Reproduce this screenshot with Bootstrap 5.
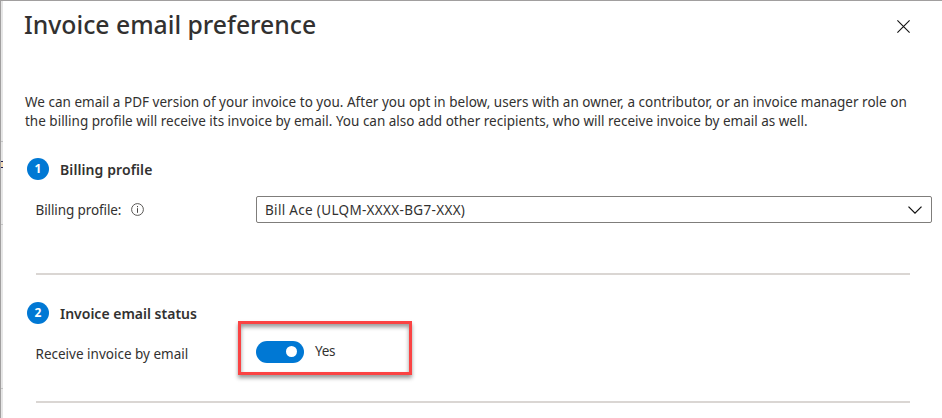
<!DOCTYPE html>
<html lang="en">
<head>
<meta charset="utf-8">
<meta name="viewport" content="width=device-width, initial-scale=1">
<title>Invoice email preference</title>
<link href="https://cdn.jsdelivr.net/npm/bootstrap@5.3.0/dist/css/bootstrap.min.css" rel="stylesheet">
<style>
body{font-family:"Noto Sans","Open Sans",sans-serif;font-size:13.5px;line-height:19px;color:#323130;width:942px;height:418px;overflow:hidden;background:#fff}
.shell{height:418px;border-top:1px solid #a19f9f;border-left:1px solid #a19f9f}
.under{width:2px;background:#e6e6e6}
.under i{display:block;height:1px;background:#c4c4c4}
.under .g1{margin-top:140px}
.under .glyph{margin-top:19px;height:7px;border-top:1px solid #1b1a4e;border-bottom:1px solid #1b1a4e;background:#f3dcb8}
.under .g2{margin-top:56px}
.under .g3{margin-top:163px}
.pane-head{height:92px;padding:7px 32px 0 21px}
.pane-title{font-size:24.75px;line-height:34px;font-weight:500;margin:0;white-space:nowrap}
.close-x{width:13px;height:13px;margin-top:12px}
.intro{padding-left:22px;white-space:nowrap}
.intro span{display:block}
.l1{letter-spacing:.018px}
.step{height:22px;padding-left:24px}
.step-first{margin-top:27px}
.step-second{margin-top:27px}
.step-no{width:22px;height:22px;border-radius:50%;background:#0078d4;color:#fff;font-weight:700;font-size:12px;line-height:21px;text-align:center}
.step-name{font-size:14px;font-weight:600;line-height:22px;margin:0 0 0 11px;padding-top:2px}
.step-one{letter-spacing:.1px}
.field{padding-left:33px}
.field-first{margin-top:16px}
.field-second{margin-top:-3px}
.field-label{width:220px;white-space:nowrap}
.f1{letter-spacing:-.1px;margin-left:-.5px;padding-top:1px}
.f2{letter-spacing:.32px;padding-top:1px}
.f3{margin-left:-.5px}
.info{margin-left:10px}
.picker{width:676px;height:27px;border:1px solid #7f7d7b;border-radius:2px;padding:0 9px 0 8px}
.rule{height:2px;background:#dad6d3;margin-left:33px;width:874px}
.rule-first{margin-top:50px}
.rule-second{margin-top:26px}
.hilite{width:174px;height:54px;margin-left:-18px;border:3px solid #fa4343;padding:7px 0 0 15px;box-shadow:0 3px 4px rgba(0,0,0,.4),inset 0 3px 4px rgba(0,0,0,.4)}
.toggle{width:48px;height:22px;border-radius:11px;background:#0078d4;padding-right:7px}
.knob{width:11px;height:11px;border-radius:50%;background:#fff}
.yes{margin-left:11px;letter-spacing:-.3px}
.label-low{padding-top:12px}
</style>
<script src="https://cdn.jsdelivr.net/npm/bootstrap@5.3.0/dist/js/bootstrap.bundle.min.js"></script>
</head>
<body>
<div class="shell d-flex">
  <div class="under flex-shrink-0"><i class="g1"></i><div class="glyph"></div><i class="g2"></i><i class="g3"></i></div>
  <main class="flex-grow-1">
    <header class="pane-head d-flex justify-content-between align-items-start">
      <h1 class="pane-title">Invoice email preference</h1>
      <svg class="close-x" viewBox="0 0 13 13" fill="none" stroke="#111" stroke-width="1.1"><path d="M.4.4l12.2 12.2M12.6.4L.4 12.6"/></svg>
    </header>
    <div class="intro">
      <span class="l1">We can email a PDF version of your invoice to you. After you opt in below, users with an owner, a contributor, or an invoice manager role on</span>
      <span class="l2">the billing profile will receive its invoice by email. You can also add other recipients, who will receive invoice by email as well.</span>
    </div>
    <section>
      <div class="step step-first d-flex align-items-center"><span class="step-no">1</span><h2 class="step-name step-one">Billing profile</h2></div>
      <div class="field field-first d-flex align-items-center">
        <div class="field-label d-flex align-items-center"><span class="f1">Billing profile:</span>
          <svg class="info" width="13" height="13" viewBox="0 0 13 13" fill="none" stroke="#484644"><circle cx="6.5" cy="6.5" r="5.9" stroke-width=".9"/><path d="M6.5 5.2v4.6M6.5 3v1.2"/></svg>
        </div>
        <div class="picker d-flex align-items-center justify-content-between"><span class="f2">Bill Ace (ULQM-XXXX-BG7-XXX)</span>
          <svg width="14" height="8" viewBox="0 0 14 8" fill="none" stroke="#111" stroke-width="1.3"><path d="M.5.6L7 7.1 13.5.6"/></svg>
        </div>
      </div>
    </section>
    <div class="rule rule-first"></div>
    <section>
      <div class="step step-second d-flex align-items-center"><span class="step-no">2</span><h2 class="step-name">Invoice email status</h2></div>
      <div class="field field-second d-flex align-items-center">
        <div class="field-label label-low"><span class="f3">Receive invoice by email</span></div>
        <div class="hilite d-flex align-items-center"><span class="toggle d-flex align-items-center justify-content-end"><span class="knob"></span></span><span class="yes">Yes</span></div>
      </div>
    </section>
    <div class="rule rule-second"></div>
  </main>
</div>
</body>
</html>
